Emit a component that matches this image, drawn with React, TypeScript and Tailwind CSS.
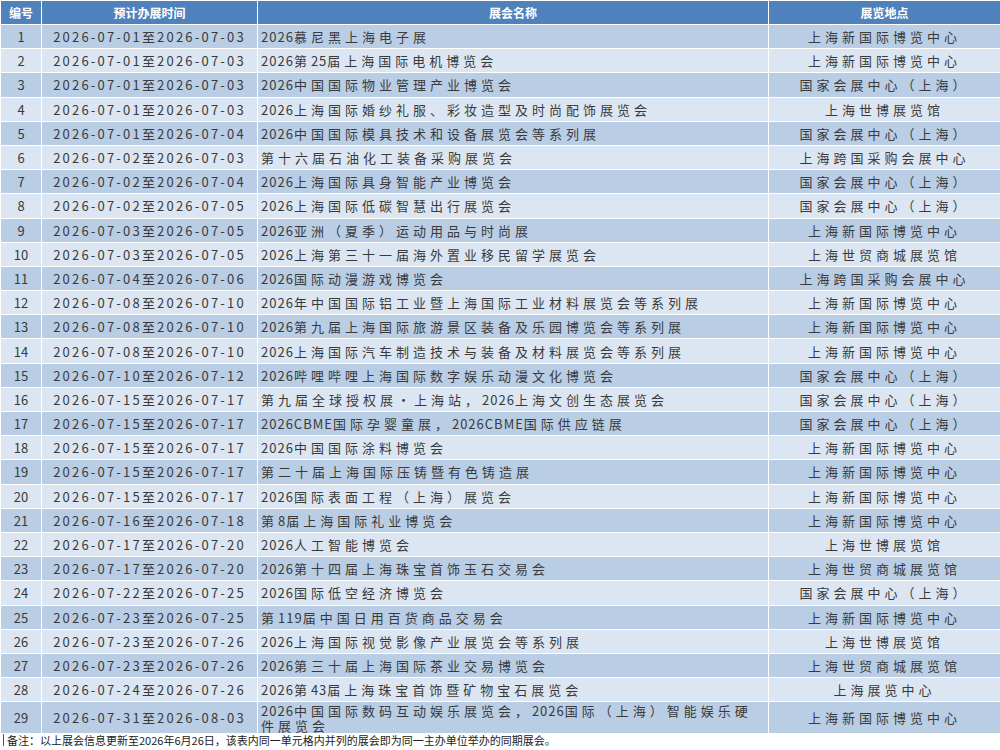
const rows: [string, string, string, string][] = [
  ["2026-07-01", "2026-07-03", "2026慕尼黑上海电子展", "上海新国际博览中心"],
  ["2026-07-01", "2026-07-03", "2026第25届上海国际电机博览会", "上海新国际博览中心"],
  ["2026-07-01", "2026-07-03", "2026中国国际物业管理产业博览会", "国家会展中心（上海）"],
  ["2026-07-01", "2026-07-03", "2026上海国际婚纱礼服、彩妆造型及时尚配饰展览会", "上海世博展览馆"],
  ["2026-07-01", "2026-07-04", "2026中国国际模具技术和设备展览会等系列展", "国家会展中心（上海）"],
  ["2026-07-02", "2026-07-03", "第十六届石油化工装备采购展览会", "上海跨国采购会展中心"],
  ["2026-07-02", "2026-07-04", "2026上海国际具身智能产业博览会", "国家会展中心（上海）"],
  ["2026-07-02", "2026-07-05", "2026上海国际低碳智慧出行展览会", "国家会展中心（上海）"],
  ["2026-07-03", "2026-07-05", "2026亚洲（夏季）运动用品与时尚展", "上海新国际博览中心"],
  ["2026-07-03", "2026-07-05", "2026上海第三十一届海外置业移民留学展览会", "上海世贸商城展览馆"],
  ["2026-07-04", "2026-07-06", "2026国际动漫游戏博览会", "上海跨国采购会展中心"],
  ["2026-07-08", "2026-07-10", "2026年中国国际铝工业暨上海国际工业材料展览会等系列展", "上海新国际博览中心"],
  ["2026-07-08", "2026-07-10", "2026第九届上海国际旅游景区装备及乐园博览会等系列展", "上海新国际博览中心"],
  ["2026-07-08", "2026-07-10", "2026上海国际汽车制造技术与装备及材料展览会等系列展", "上海新国际博览中心"],
  ["2026-07-10", "2026-07-12", "2026哔哩哔哩上海国际数字娱乐动漫文化博览会", "国家会展中心（上海）"],
  ["2026-07-15", "2026-07-17", "第九届全球授权展•上海站，2026上海文创生态展览会", "国家会展中心（上海）"],
  ["2026-07-15", "2026-07-17", "2026CBME国际孕婴童展，2026CBME国际供应链展", "国家会展中心（上海）"],
  ["2026-07-15", "2026-07-17", "2026中国国际涂料博览会", "上海新国际博览中心"],
  ["2026-07-15", "2026-07-17", "第二十届上海国际压铸暨有色铸造展", "上海新国际博览中心"],
  ["2026-07-15", "2026-07-17", "2026国际表面工程（上海）展览会", "上海新国际博览中心"],
  ["2026-07-16", "2026-07-18", "第8届上海国际礼业博览会", "上海新国际博览中心"],
  ["2026-07-17", "2026-07-20", "2026人工智能博览会", "上海世博展览馆"],
  ["2026-07-17", "2026-07-20", "2026第十四届上海珠宝首饰玉石交易会", "上海世贸商城展览馆"],
  ["2026-07-22", "2026-07-25", "2026国际低空经济博览会", "国家会展中心（上海）"],
  ["2026-07-23", "2026-07-25", "第119届中国日用百货商品交易会", "上海新国际博览中心"],
  ["2026-07-23", "2026-07-26", "2026上海国际视觉影像产业展览会等系列展", "上海世博展览馆"],
  ["2026-07-23", "2026-07-26", "2026第三十届上海国际茶业交易博览会", "上海世贸商城展览馆"],
  ["2026-07-24", "2026-07-26", "2026第43届上海珠宝首饰暨矿物宝石展览会", "上海展览中心"],
  ["2026-07-31", "2026-08-03", "2026中国国际数码互动娱乐展览会，2026国际（上海）智能娱乐硬件展览会", "上海新国际博览中心"],
];

// latin runs (digits, CBME) are set tighter than the CJK text around them
function Name({ text }: { text: string }) {
  const parts = text.split(/([0-9A-Z]+)/);
  return (
    <>
      {parts.map((p, i) =>
        /^[0-9A-Z]+$/.test(p) ? (
          <span key={i} className="tracking-[1px]">{p}</span>
        ) : (
          <span key={i}>{p}</span>
        )
      )}
    </>
  );
}

export default function App() {
  return (
    <div className="w-[1000px] h-[750px] bg-white overflow-hidden" style={{ fontFamily: '"Noto Sans CJK SC", sans-serif' }}>
      <table className="w-[1000px] table-fixed border-collapse text-[13px] text-[#3a3a3a]">
        <colgroup>
          <col className="w-[41px]" />
          <col className="w-[216px]" />
          <col className="w-[511px]" />
          <col className="w-[232px]" />
        </colgroup>
        <thead>
          <tr className="h-[24px] bg-[#4f81bd] text-white text-[12px] font-bold">
            <th className="border border-white">编号</th>
            <th className="border border-white">预计办展时间</th>
            <th className="border border-white">展会名称</th>
            <th className="border border-white">展览地点</th>
          </tr>
        </thead>
        <tbody>
          {rows.map((r, i) => (
            <tr key={i} className={(i % 2 === 0 ? "bg-[#b9cde5]" : "bg-[#dce6f2]") + (i === 28 ? " h-[32px]" : " h-[24.2px]")}>
              <td className="border border-white text-center leading-none">{i + 1}</td>
              <td className="border border-white text-center leading-none tracking-[2.2px]">
                {r[0]}至{r[1]}
              </td>
              <td className="border border-white px-[3px] leading-[15px] tracking-[4px]">
                <Name text={r[2]} />
              </td>
              <td className="border border-white text-center leading-none tracking-[4px]">{r[3]}</td>
            </tr>
          ))}
        </tbody>
      </table>
      <div className="ml-[3px] border-l border-[#555] pl-[3px] text-[11px] leading-[12px] text-[#222]">
        备注：以上展会信息更新至2026年6月26日，该表内同一单元格内并列的展会即为同一主办单位举办的同期展会。
      </div>
    </div>
  );
}
